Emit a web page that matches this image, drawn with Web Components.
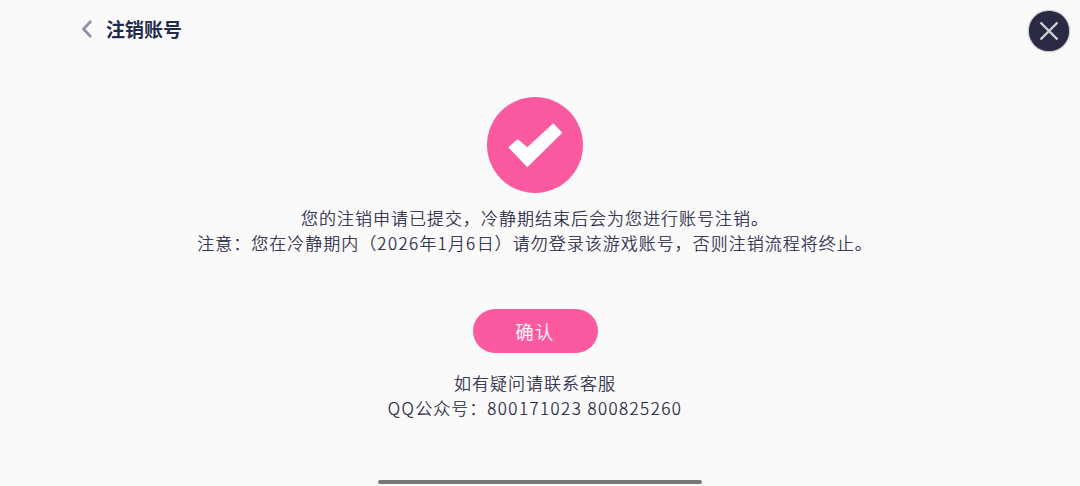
<!DOCTYPE html>
<html lang="zh-CN"><head><meta charset="utf-8">
<style>
html,body{margin:0;padding:0;height:100%;background:#fafafa;overflow:hidden}
body{font-family:"Noto Sans CJK SC","Noto Sans",sans-serif;color:#2b3350}
.lat{letter-spacing:1.45px}
</style></head><body>
<account-page>
  <page-header slot="header" title-text="注销账号"></page-header>
  <close-button slot="close"></close-button>
  <success-icon></success-icon>
  <notice-text>
    <div>您的注销申请已提交，冷静期结束后会为您进行账号注销。</div>
    <div>注意：您在冷静期内（<span class="lat">2026</span>年<span class="lat">1</span>月<span class="lat">6</span>日）请勿登录该游戏账号，否则注销流程将终止。</div>
  </notice-text>
  <pill-button>确认</pill-button>
  <notice-text class="contact">
    <div>如有疑问请联系客服</div>
    <div><span class="lat">QQ</span>公众号：<span class="lat">800171023 800825260</span></div>
  </notice-text>
  <home-bar slot="bar"></home-bar>
</account-page>
<script>
function def(name,html){
  customElements.define(name,class extends HTMLElement{
    constructor(){super();const r=this.attachShadow({mode:'open'});r.innerHTML=html;
      const t=r.querySelector('[data-title]');if(t)t.textContent=this.getAttribute('title-text')||'';}
  });
}
def('account-page',`<style>
:host{display:flex;flex-direction:column;height:486px;width:1080px;position:relative;box-sizing:border-box}
main{display:flex;flex-direction:column;align-items:center;padding-top:40px;padding-right:10px;flex:1}
::slotted(notice-text:not(.contact)){margin-top:12px}
::slotted(pill-button){margin-top:54px}
::slotted(.contact){margin-top:17px}
</style><slot name="header"></slot><main><slot></slot></main><slot name="close"></slot><slot name="bar"></slot>`);
def('page-header',`<style>
:host{display:flex;align-items:center;height:57px;padding-left:81px;box-sizing:border-box;flex:none}
svg{display:block;width:12px;height:20px;margin-right:13px}
span{font-size:19px;font-weight:700;color:#232b4d;line-height:1}
</style><svg viewBox="0 0 12 20"><path d="M10 2 L2.500 10 L10 18" fill="none" stroke="#8b8fa8" stroke-width="2.600"/></svg><span data-title></span>`);
def('close-button',`<style>
:host{position:absolute;left:1029px;top:11px;width:40px;height:40px;border-radius:50%;background:#2a2a45;display:block;box-shadow:0 0 2px #2a2a45}
svg{display:block;width:40px;height:40px;filter:blur(.4px)}
</style><svg viewBox="0 0 40 40"><path d="M11.500 11.500 L28.500 28.500 M28.500 11.500 L11.500 28.500" stroke="#d2d2da" stroke-width="2.400" fill="none"/></svg>`);
def('success-icon',`<style>
:host{display:block;width:96px;height:96px;flex:none}
svg{display:block;width:96px;height:96px}
</style><svg viewBox="0 0 96 96"><circle cx="48" cy="48" r="48" fill="#fb5aa0"/><path d="M21.300 50.300 L30.700 42 L40.300 50.300 L66.300 26.300 L75.300 35.700 L40.300 70.300 Z" fill="#fff"/></svg>`);
def('notice-text',`<style>
:host{display:block;text-align:center;font-size:17px;font-weight:300;line-height:25px;letter-spacing:1px;color:#1a2140;-webkit-text-stroke:.2px #1a2140;white-space:nowrap}
</style><slot></slot>`);
def('pill-button',`<style>
:host{display:flex;align-items:center;justify-content:center;width:125px;height:44px;border-radius:22px;background:#fb5aa0;color:#fff;font-size:18px;font-weight:300;-webkit-text-stroke:.3px #fff;letter-spacing:1.500px;flex:none}
</style><slot></slot>`);
def('home-bar',`<style>
:host{display:block;flex:none;align-self:center;width:324px;height:4px;margin-bottom:2px;border-radius:2px;background:#777}
</style>`);
</script>
</body></html>
